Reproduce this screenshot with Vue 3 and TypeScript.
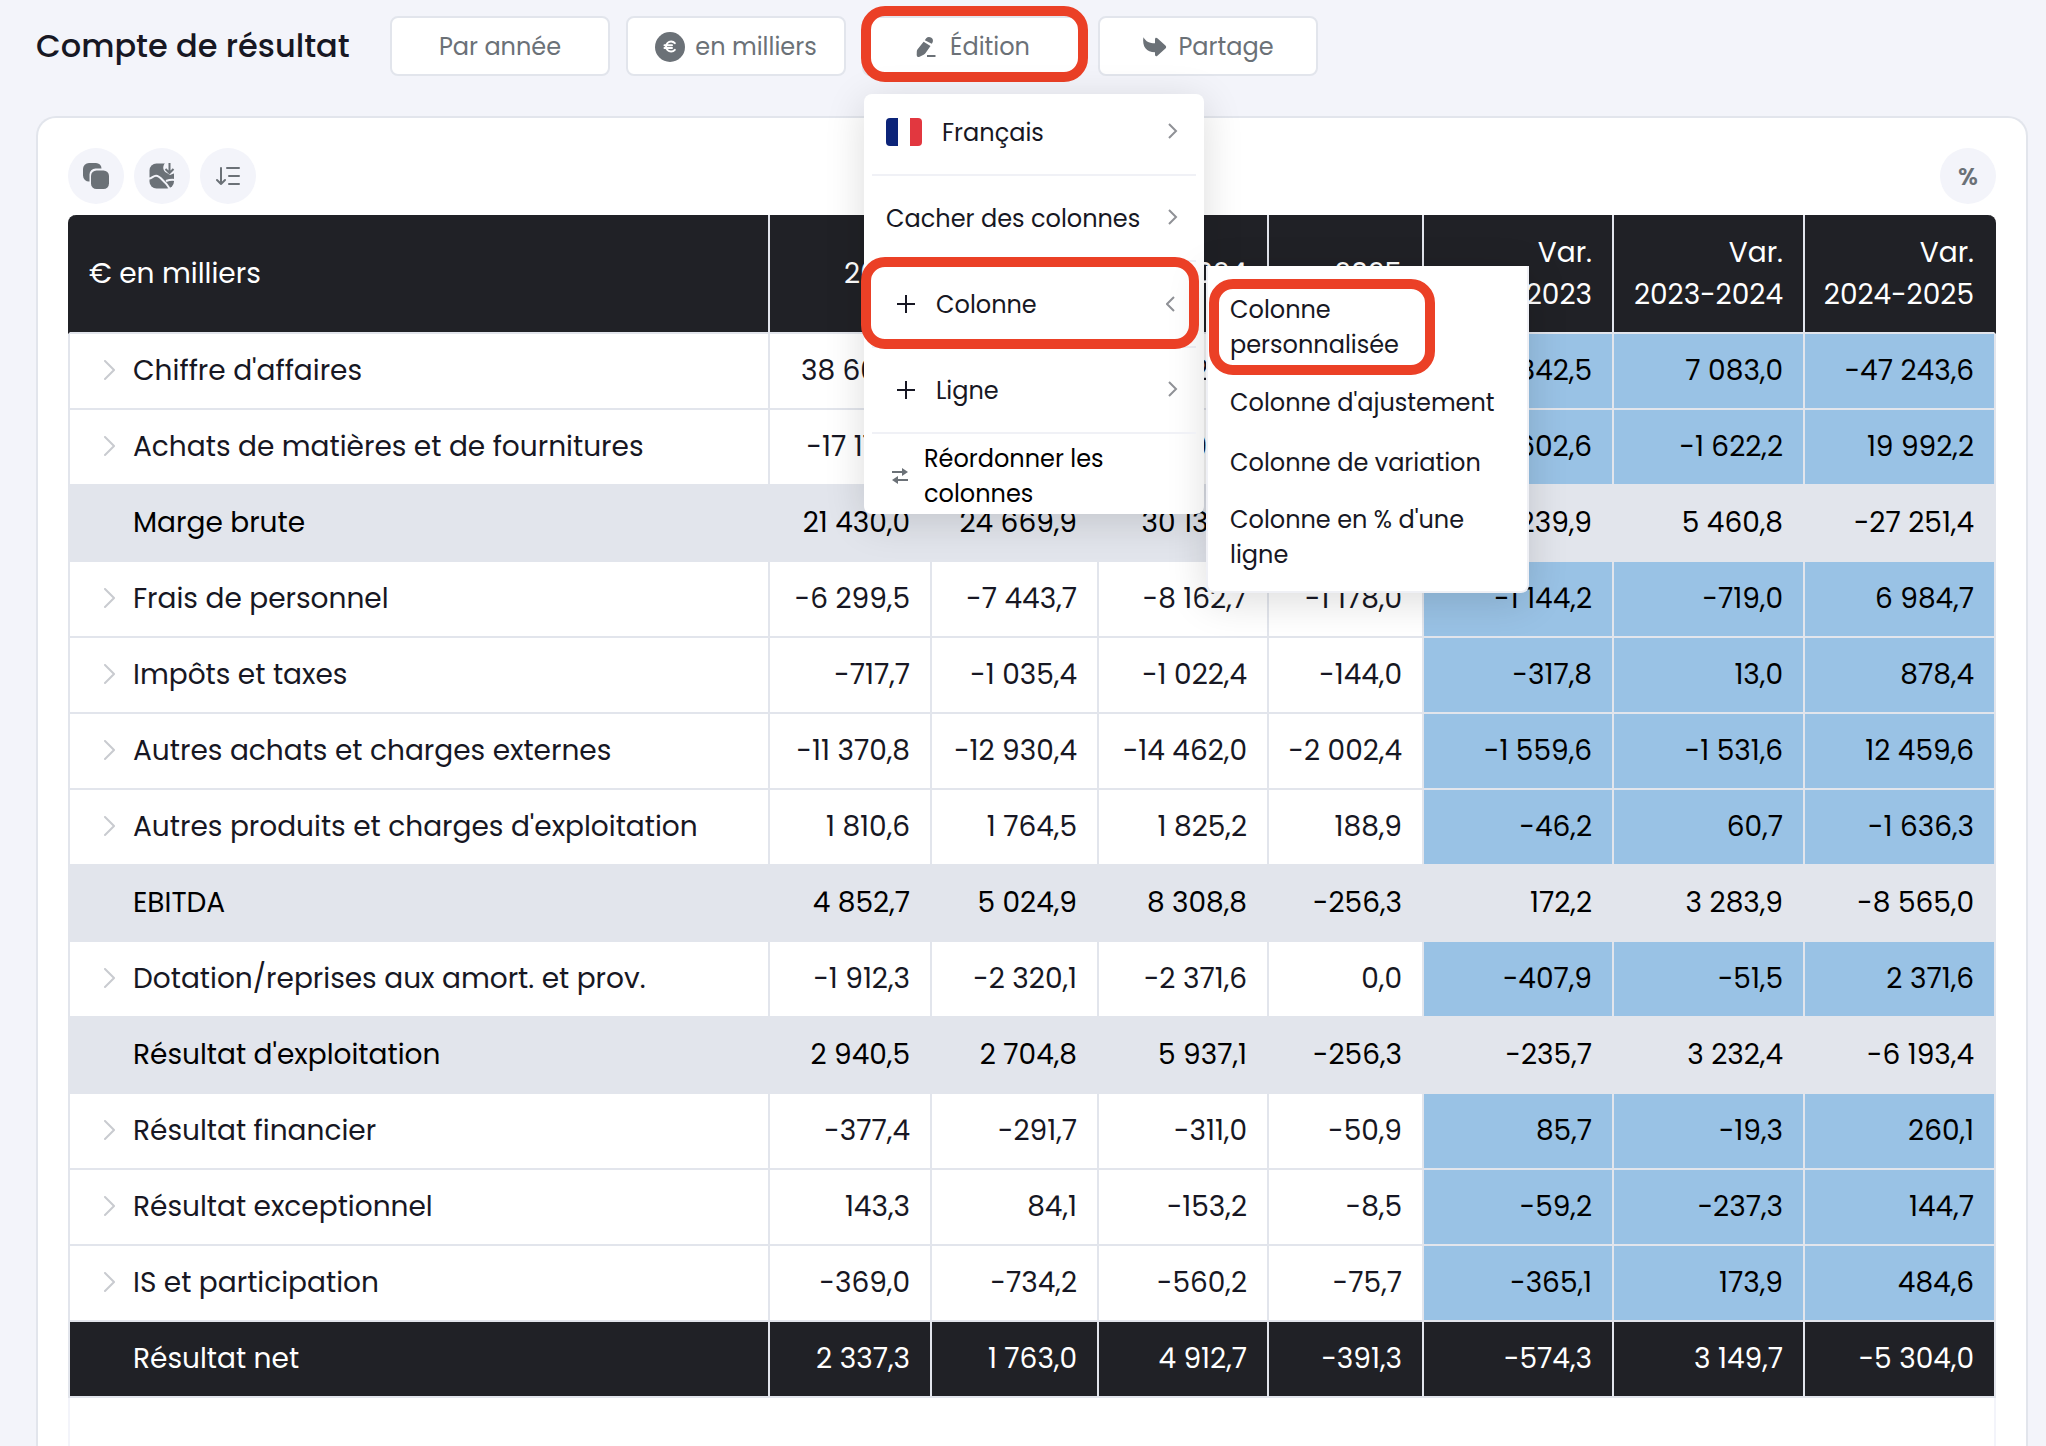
<script setup lang="ts">
interface Row {
  label: string
  kind: 'detail' | 'subtotal' | 'total'
  values: string[]
}

const columns: string[][] = [
  ['2022'],
  ['2023'],
  ['2024'],
  ['2025'],
  ['Var.', '2022-2023'],
  ['Var.', '2023-2024'],
  ['Var.', '2024-2025'],
]

const row = (kind: Row['kind'], label: string, values: string): Row => ({
  kind,
  label,
  values: values.split('|'),
})

const rows: Row[] = [
  row('detail', "Chiffre d'affaires", '38 601,5|44 444,0|51 527,0|4 283,4|5 842,5|7 083,0|-47 243,6'),
  row('detail', 'Achats de matières et de fournitures', '-17 171,5|-19 774,1|-21 396,3|-1 404,1|-2 602,6|-1 622,2|19 992,2'),
  row('subtotal', 'Marge brute', '21 430,0|24 669,9|30 130,7|2 879,3|3 239,9|5 460,8|-27 251,4'),
  row('detail', 'Frais de personnel', '-6 299,5|-7 443,7|-8 162,7|-1 178,0|-1 144,2|-719,0|6 984,7'),
  row('detail', 'Impôts et taxes', '-717,7|-1 035,4|-1 022,4|-144,0|-317,8|13,0|878,4'),
  row('detail', 'Autres achats et charges externes', '-11 370,8|-12 930,4|-14 462,0|-2 002,4|-1 559,6|-1 531,6|12 459,6'),
  row('detail', "Autres produits et charges d'exploitation", '1 810,6|1 764,5|1 825,2|188,9|-46,2|60,7|-1 636,3'),
  row('subtotal', 'EBITDA', '4 852,7|5 024,9|8 308,8|-256,3|172,2|3 283,9|-8 565,0'),
  row('detail', 'Dotation/reprises aux amort. et prov.', '-1 912,3|-2 320,1|-2 371,6|0,0|-407,9|-51,5|2 371,6'),
  row('subtotal', "Résultat d'exploitation", '2 940,5|2 704,8|5 937,1|-256,3|-235,7|3 232,4|-6 193,4'),
  row('detail', 'Résultat financier', '-377,4|-291,7|-311,0|-50,9|85,7|-19,3|260,1'),
  row('detail', 'Résultat exceptionnel', '143,3|84,1|-153,2|-8,5|-59,2|-237,3|144,7'),
  row('detail', 'IS et participation', '-369,0|-734,2|-560,2|-75,7|-365,1|173,9|484,6'),
  row('total', 'Résultat net', '2 337,3|1 763,0|4 912,7|-391,3|-574,3|3 149,7|-5 304,0'),
]
</script>

<template>
  <div class="page">
    <header class="topbar">
      <h1>Compte de résultat</h1>
      <nav class="actions">
        <button type="button" class="action">Par année</button>
        <button type="button" class="action">
          <svg width="30" height="30" viewBox="0 0 30 30" fill="none" stroke="#fff" stroke-width="2" stroke-linecap="round">
            <circle cx="15" cy="15" r="15" fill="#6b7177" stroke="none" />
            <path d="M19.8 11.200A5 5 0 1 0 19.800 17.800M9.500 13.200h7.500M9.500 16h7.500" />
          </svg>
          en milliers
        </button>
        <div class="action-wrap">
          <button type="button" class="action" aria-expanded="true">
            <svg width="26" height="22" viewBox="-2 -1 26 22" fill="#6b7177">
              <path d="M8.800 3.200l1.400-1.900C11.600-.4 13.600-.5 15.400.8s2 3.300.9 5.100l-.6.9z" />
              <path d="M7.600 4.700l6.900 4.400L9.600 16c-.5.800-1.200 1.400-2 1.800L3.600 19.700c-1.500.7-2.900-.2-2.900-1.800L.8 14.600c0-.8.300-1.600.8-2.300z" />
              <path d="M11 18h8.500v2H11z" />
            </svg>
            Édition
          </button>
          <span class="mark mark-action"></span>

          <div class="menu">
            <button type="button" class="item item-first">
              <svg class="flag" width="36" height="28" viewBox="0 0 36 28">
                <path d="M4 0h8v28H4a4 4 0 0 1-4-4V4a4 4 0 0 1 4-4z" fill="#0c2479" />
                <path d="M24 0h8a4 4 0 0 1 4 4v20a4 4 0 0 1-4 4h-8z" fill="#e2373f" />
              </svg>
              <span class="grow">Français</span>
              <svg class="chev" width="10" height="18" viewBox="0 0 10 18"><path d="M1 1l7 7-7 7" /></svg>
            </button>
            <button type="button" class="item">
              <span class="grow">Cacher des colonnes</span>
              <svg class="chev" width="10" height="18" viewBox="0 0 10 18"><path d="M1 1l7 7-7 7" /></svg>
            </button>
            <div class="item-wrap">
              <button type="button" class="item item-add" aria-expanded="true">
                <svg class="plus" width="18" height="18" viewBox="0 0 18 18"><path d="M9 0v18M0 9h18" /></svg>
                <span class="grow">Colonne</span>
                <svg class="chev" width="12" height="16" viewBox="0 0 12 16"><path d="M8 1L1 8l7 7" /></svg>
              </button>
              <div class="submenu">
                <div class="item-wrap">
                  <button type="button" class="subitem">Colonne<br />personnalisée</button>
                  <span class="mark mark-sub"></span>
                </div>
                <button type="button" class="subitem">Colonne d'ajustement</button>
                <button type="button" class="subitem">Colonne de variation</button>
                <button type="button" class="subitem">Colonne en % d'une<br />ligne</button>
              </div>
              <span class="mark mark-item"></span>
            </div>
            <button type="button" class="item item-add">
              <svg class="plus" width="18" height="18" viewBox="0 0 18 18"><path d="M9 0v18M0 9h18" /></svg>
              <span class="grow">Ligne</span>
              <svg class="chev" width="10" height="18" viewBox="0 0 10 18"><path d="M1 1l7 7-7 7" /></svg>
            </button>
            <button type="button" class="item item-last">
              <svg width="16" height="18" viewBox="0 0 16 18" fill="#6b7177">
                <path d="M0 4h10V1l6 4-6 4V6H0zM16 12H6V9l-6 4 6 4v-3h10z" />
              </svg>
              <span>Réordonner les<br />colonnes</span>
            </button>
          </div>
        </div>
        <button type="button" class="action">
          <svg width="26" height="22" viewBox="-1 -1 26 22" fill="#6b7177">
            <path d="M.4.300C3 4.800 6.500 6.300 12 6.300V2.400c0-1.600 1.200-2.100 2.400-1.100l8 7.100c1 .9 1 2.300 0 3.200l-8 7.100c-1.200 1-2.400.5-2.400-1.100V15.200C3.500 15.200-1 9.800.4.300z" />
          </svg>
          Partage
        </button>
      </nav>
    </header>

    <main class="card">
      <div class="tools">
        <button type="button" class="tool" aria-label="Copier">
          <svg width="26" height="26" viewBox="0 0 26 26" fill="#6b7177">
            <path d="M6 0h7a5.500 5.500 0 0 1 5.500 5.500H12.500A6 6 0 0 0 6.500 11.500V18.500A6 6 0 0 1 0 12.500V6a6 6 0 0 1 6-6z" />
            <rect x="8" y="7.500" width="18" height="18.500" rx="5.500" />
          </svg>
        </button>
        <button type="button" class="tool" aria-label="Exporter l'image">
          <svg width="26" height="26" viewBox="0 0 26 26">
            <rect x="0.500" y="0.500" width="24.500" height="25" rx="7" fill="#6b7177" />
            <path d="M0 15.500c3 0 4-2.800 7-2.800 4 0 6 4.300 9.500 7.300 2 1.800 3 4.500 4.500 6M17 18c2.500-1 5-2 9-1" fill="none" stroke="#f3f4fa" stroke-width="2" />
            <path d="M16 0c-3 4-2 8 2 10l3 2 5-2V0z" fill="#f3f4fa" />
            <path d="M20.500 0v9M16.500 6l4 4 4-4" fill="none" stroke="#6b7177" stroke-width="2" />
          </svg>
        </button>
        <button type="button" class="tool" aria-label="Trier">
          <svg width="24" height="20" viewBox="0 0 24 20" fill="none" stroke="#6b7177" stroke-width="2" stroke-linecap="round" stroke-linejoin="round">
            <path d="M5 2v16M1 14l4 4 4-4M11 2h12M13 10h10M13 18h10" />
          </svg>
        </button>
        <button type="button" class="tool tool-percent">%</button>
      </div>

      <table>
        <thead>
          <tr>
            <th class="label" scope="col">€ en milliers</th>
            <th v-for="(lines, i) in columns" :key="i" :class="'col-' + i" scope="col">
              <span v-for="text in lines" :key="text" class="head-line">{{ text }}</span>
            </th>
          </tr>
        </thead>
        <tbody>
          <tr v-for="r in rows" :key="r.label" :class="r.kind">
            <th class="label" scope="row">
              <span class="label-in">
                <span class="toggle">
                  <svg v-if="r.kind === 'detail'" width="12" height="22" viewBox="0 0 12 22"><path d="M2 1l9 9-9 9" /></svg>
                </span>
                {{ r.label }}
              </span>
            </th>
            <td v-for="(v, i) in r.values" :key="i" :class="{ variation: i > 3 }">{{ v }}</td>
          </tr>
        </tbody>
      </table>
      <div class="table-foot"></div>
    </main>
  </div>
</template>

<style>
body {
  margin: 0;
  background: #f3f4fa;
}
</style>

<style scoped>
* {
  box-sizing: border-box;
}

.page {
  display: flex;
  flex-direction: column;
  min-height: 100vh;
  padding: 16px 18px 0 36px;
  background: #f3f4fa;
  color: #171723;
  font-family: Poppins, Inter, sans-serif;
  font-size: 28px;
}

button {
  margin: 0;
  padding: 0;
  border: 0;
  background: none;
  color: inherit;
  font: inherit;
  text-align: left;
  white-space: nowrap;
  cursor: pointer;
}

svg {
  display: block;
  flex: none;
}

.topbar {
  display: flex;
  align-items: center;
  gap: 40px;
  height: 60px;
}

h1 {
  width: 314px;
  margin: 0;
  font-size: 32px;
  font-weight: 500;
  line-height: 60px;
  white-space: nowrap;
}

.actions {
  display: flex;
  gap: 16px;
}

.action {
  display: flex;
  align-items: center;
  justify-content: center;
  gap: 10px;
  width: 220px;
  height: 60px;
  padding-top: 2px;
  border: 2px solid #e2e5ec;
  border-radius: 8px;
  background: #fff;
  color: #6b7177;
  font-size: 24px;
  line-height: 36px;
}

.action-wrap,
.item-wrap {
  position: relative;
}

.mark {
  position: absolute;
  border: 10px solid #eb4026;
  border-radius: 24px;
  pointer-events: none;
}

.mark-action {
  top: -10px;
  left: -1px;
  right: -6px;
  height: 76px;
}

.mark-item {
  top: -5px;
  left: -3px;
  width: 338px;
  height: 92px;
}

.mark-sub {
  top: -3px;
  left: 1px;
  width: 226px;
  height: 96px;
}

.menu {
  position: absolute;
  z-index: 2;
  top: 78px;
  left: 2px;
  width: 340px;
  border-radius: 8px;
  background: #fff;
  box-shadow: 0 8px 40px rgba(0, 0, 0, 0.14);
  font-size: 24px;
  line-height: 35px;
}

.item {
  position: relative;
  display: flex;
  align-items: center;
  width: 100%;
  height: 86px;
  padding: 0 26px 2px 22px;
}

.item:not(.item-last)::after {
  content: '';
  position: absolute;
  right: 8px;
  bottom: 0;
  left: 8px;
  height: 2px;
  background: #f0f1f6;
}

.item-first {
  height: 82px;
  padding-bottom: 6px;
}

.item-add {
  padding-left: 33px;
}

.item-last {
  height: 80px;
  gap: 16px;
  padding: 4px 0 0 28px;
  color: #000;
}

.flag {
  margin-right: 20px;
}

.grow {
  flex: 1;
}

.chev {
  fill: none;
  stroke: #8f9196;
  stroke-width: 2;
}

.plus {
  margin-right: 21px;
  fill: none;
  stroke: #171723;
  stroke-width: 2;
}

.submenu {
  position: absolute;
  top: 4px;
  left: 342px;
  width: 323px;
  padding: 16px 0 9px;
  border: solid #eff0f5;
  border-width: 0 2px 2px;
  border-radius: 0 0 8px 8px;
  background: #fff;
  box-shadow: 0 8px 40px rgba(0, 0, 0, 0.14);
}

.subitem {
  display: flex;
  align-items: center;
  width: 100%;
  min-height: 60px;
  padding: 10px 22px;
}

.card {
  flex: 1;
  margin-top: 40px;
  padding: 30px 30px 0;
  border: 2px solid #e2e5ec;
  border-bottom: 0;
  border-radius: 20px 20px 0 0;
  background: #fff;
}

.tools {
  display: flex;
  gap: 10px;
  margin-bottom: 11px;
}

.tool {
  display: flex;
  align-items: center;
  justify-content: center;
  width: 56px;
  height: 56px;
  border-radius: 50%;
  background: #f3f4fa;
  color: #6b7177;
}

.tool-percent {
  margin-left: auto;
  font-size: 24px;
  font-weight: 600;
}

table {
  width: 100%;
  border-collapse: separate;
  border-spacing: 0;
  table-layout: fixed;
}

th,
td {
  height: 76px;
  padding: 0 20px 0 0;
  border: solid #e2e5ec;
  border-width: 0 2px 2px 0;
  font-weight: 400;
  line-height: 42px;
  text-align: right;
  white-space: nowrap;
}

thead th {
  height: 119px;
  background: #202126;
  color: #fff;
}

.label {
  border-left-width: 2px;
  text-align: left;
}

thead .label {
  padding-left: 19px;
  border-left-color: #202126;
  border-top-left-radius: 8px;
}

thead th:last-child {
  border-right-color: #202126;
  border-top-right-radius: 8px;
}

.head-line {
  display: block;
}

.col-0 { width: 162px; }
.col-1 { width: 167px; }
.col-2 { width: 170px; }
.col-3 { width: 155px; }
.col-4 { width: 190px; }
.col-5,
.col-6 { width: 191px; }

.label-in {
  display: flex;
  align-items: center;
}

.toggle {
  width: 30px;
  margin-left: 33px;
}

.toggle svg {
  fill: none;
  stroke: #c9cbd0;
  stroke-width: 2;
  stroke-linecap: round;
}

.variation {
  background: #99c2e5;
  color: #000;
}

.subtotal th,
.subtotal td {
  background: #e2e5ec;
  color: #000;
}

.total th,
.total td {
  background: #202126;
  color: #fff;
}

.table-foot {
  height: 48px;
  border: solid #f3f4fa;
  border-width: 0 2px;
}
</style>
